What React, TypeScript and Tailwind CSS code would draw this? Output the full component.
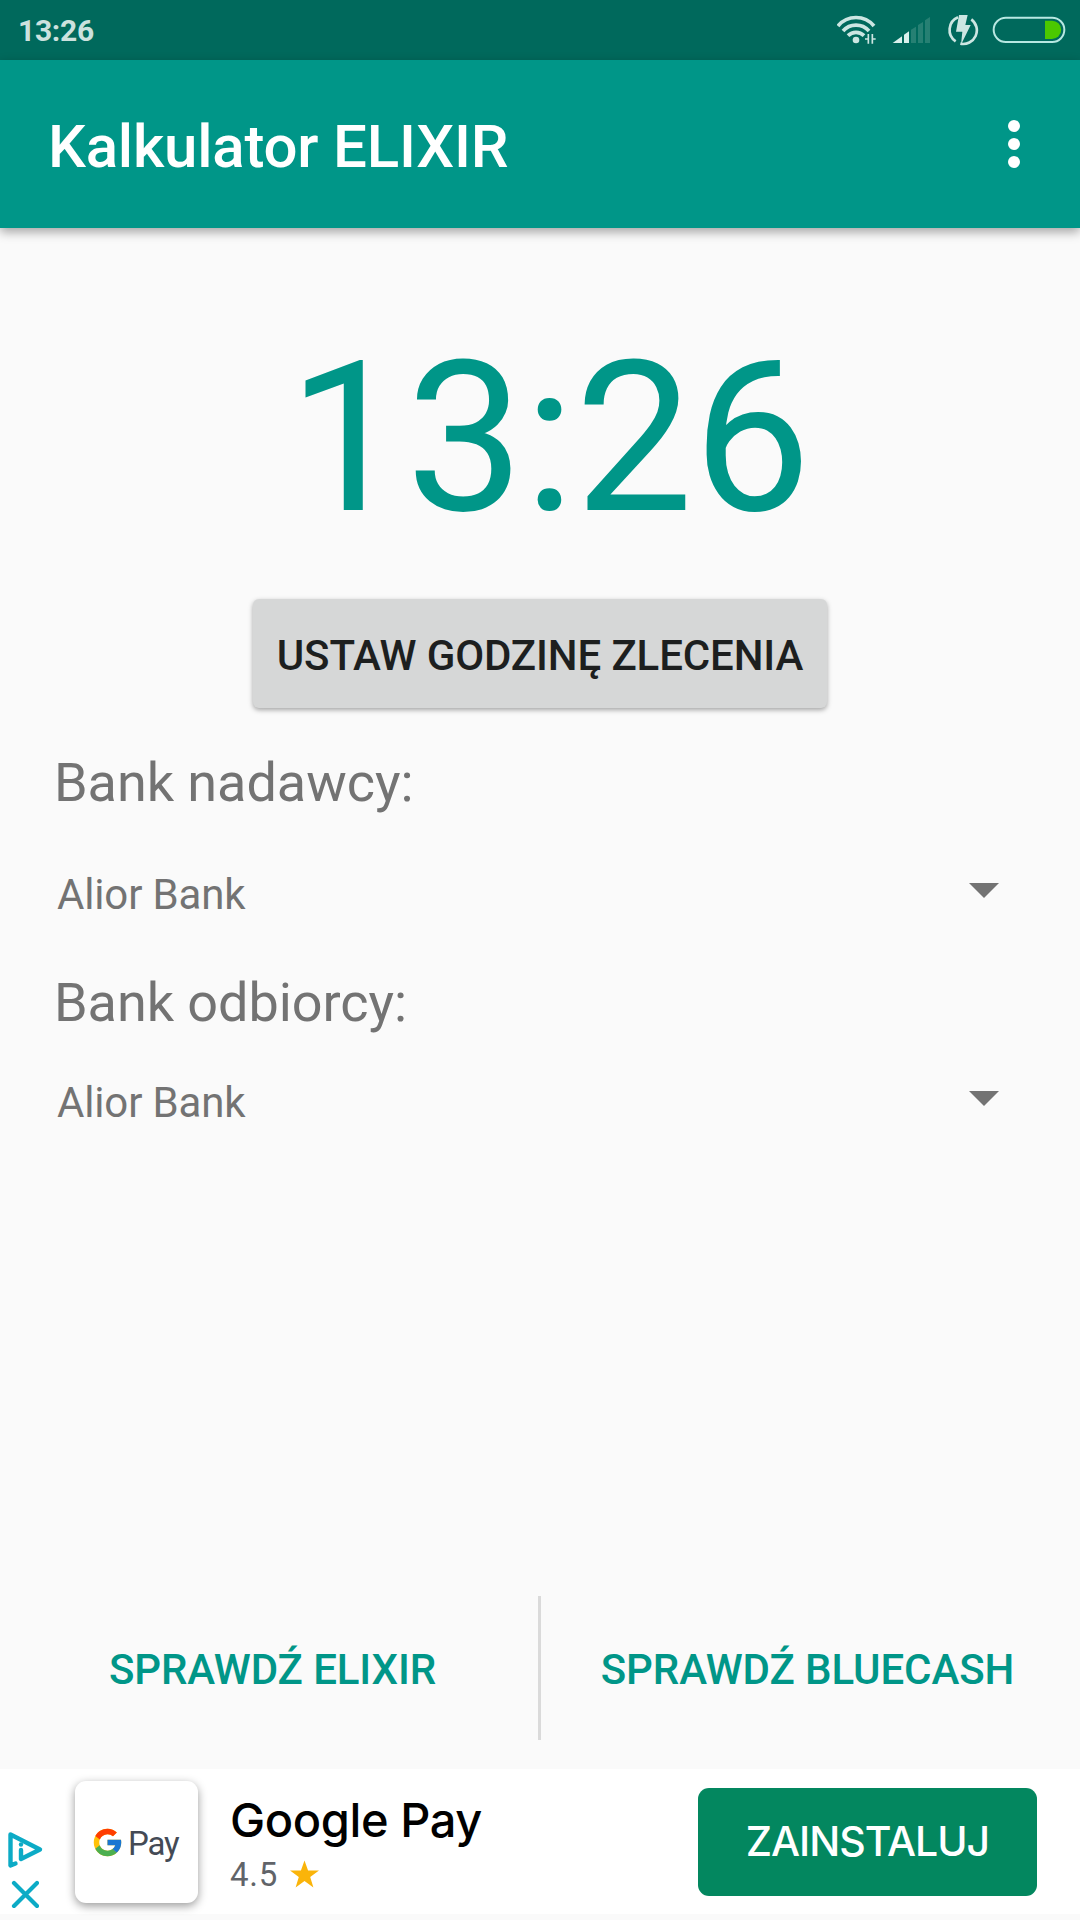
import { FcGoogle } from 'react-icons/fc';

const BANKS = {
  sender: 'Alior Bank',
  receiver: 'Alior Bank',
};

export default function App() {
  return (
    <div className="flex h-[1920px] w-[1080px] flex-col overflow-hidden bg-[#fafafa] font-[Roboto,sans-serif]">
      <StatusBar />
      <AppBar title="Kalkulator ELIXIR" />

      <main className="flex flex-1 flex-col">
        <div className="mt-[87px] pl-[19px] text-center text-[210px] leading-[246px] text-[#009688]">13:26</div>
        <button className="mx-auto mt-[38px] flex h-[109px] w-[574px] items-center justify-center rounded-[6px] bg-[#d6d7d7] pt-[5px] text-[42px] leading-[48px] font-medium tracking-[-0.12px] whitespace-nowrap text-[#1d1f1f] shadow-[0_2px_5px_rgba(0,0,0,0.35)]">
          USTAW GODZINĘ ZLECENIA
        </button>

        <div className="mt-[43px] pl-[54px] text-[54px] leading-[64px] tracking-[-0.05px] text-[#737373]">Bank nadawcy:</div>
        <BankSelect className="mt-[56px]" value={BANKS.sender} />
        <div className="mt-[52px] pl-[54px] text-[54px] leading-[64px] tracking-[-0.05px] text-[#737373]">Bank odbiorcy:</div>
        <BankSelect className="mt-[44px]" value={BANKS.receiver} />
      </main>

      <div className="mb-[29px] flex h-[144px] text-[42px] leading-[48px] font-medium tracking-[-0.1px] text-[#009688]">
        <button className="flex w-[538px] items-center justify-center pt-[3px] pl-[7px] whitespace-nowrap">SPRAWDŹ ELIXIR</button>
        <div className="w-[3px] bg-[#dadada]" />
        <button className="flex flex-1 items-center justify-center pt-[3px] pr-[6px] whitespace-nowrap">SPRAWDŹ BLUECASH</button>
      </div>

      <AdBanner />
    </div>
  );
}

function StatusBar() {
  return (
    <div className="flex h-[60px] items-center bg-[#00695c] pr-[14px] pl-[18px]">
      <span className="flex-1 pt-[2px] text-[30px] leading-[36px] font-bold tracking-[-0.3px] text-[#cce1de]">13:26</span>

      {/* Wi-Fi */}
      <svg className="mr-[15px] h-[30px] w-[40px]" viewBox="51 45 120 90" fill="none" stroke="#cce6e2">
        <path d="M54 78A70 70 0 0 1 162 78" strokeWidth="11" />
        <path d="M69 93A52 52 0 0 1 147 93" strokeWidth="11" />
        <path d="M84 107A34 34 0 0 1 132 107" strokeWidth="11" />
        <circle cx="108" cy="120" r="10" fill="#cce6e2" stroke="none" />
        <path d="M135 117H145M145 102V131M157 102V131M157 117H167" strokeWidth="5" />
      </svg>

      {/* Signal */}
      <svg className="mr-[16px] h-[30px] w-[39px]" viewBox="216 45 117 90">
        <path d="M218 129L246 109V129Z" fill="#d9f0ec" />
        <path d="M252 104L267 94V129H252Z" fill="#d9f0ec" />
        <path d="M273 89L288 80V129H273ZM294 75L309 66V129H294ZM315 61L330 51V129H315Z" fill="#268073" />
      </svg>

      {/* Charging saver */}
      <svg className="mr-[13px] h-[32px] w-[32px]" viewBox="381 42 96 96" fill="none">
        <path d="M414 52A41 41 0 0 0 407 124" stroke="#cce6e2" strokeWidth="8" />
        <path d="M454 58A41 41 0 0 1 421 131" stroke="#cce6e2" strokeWidth="8" />
        <path d="M417 45H443L436 75H452L423 134L427 95H408Z" fill="#cce6e2" />
      </svg>

      {/* Battery */}
      <svg className="h-[28px] w-[74px]" viewBox="516 48 222 84">
        <path d="M675 62H696A27.5 27.5 0 0 1 696 117H675Z" fill="#4bc800" />
        <rect x="521" y="53" width="212" height="73" rx="36.5" fill="none" stroke="#b8e8e2" strokeWidth="6" />
      </svg>
    </div>
  );
}

function AppBar({ title }: { title: string }) {
  return (
    <header className="z-10 flex h-[168px] items-center justify-between bg-[#009688] pr-[60px] pl-[48px] shadow-[0_4px_10px_rgba(0,0,0,0.35)]">
      <h1 className="pt-[5px] text-[60px] leading-[70px] font-medium tracking-[-0.2px] text-white">{title}</h1>
      <button className="flex flex-col gap-[6px]">
        <span className="size-3 rounded-full bg-white" />
        <span className="size-3 rounded-full bg-white" />
        <span className="size-3 rounded-full bg-white" />
      </button>
    </header>
  );
}

function BankSelect({ value, className }: { value: string; className: string }) {
  return (
    <div className={`flex h-[48px] justify-between pr-[81px] pl-[57px] ${className}`}>
      <span className="text-[42px] leading-[48px] tracking-[-0.15px] text-[#737373]">{value}</span>
      <svg className="mt-[12px] h-[15px] w-[30px]" viewBox="0 0 30 15">
        <path d="M0 0H30L15 15Z" fill="#737373" />
      </svg>
    </div>
  );
}

function AdBanner() {
  return (
    <div className="h-[151px] bg-[#fafafa]">
      <div className="flex h-[145px] items-start bg-white">
        {/* Ad choices */}
        <div className="flex w-[75px] flex-col pt-[62px] pl-[7px]">
          <svg className="h-[38px] w-[37px]" viewBox="0 0 37 38" fill="none" stroke="#0cabc6" strokeWidth="4.4" strokeLinecap="round" strokeLinejoin="round">
            <path d="M8.5 32.5L3.5 34.5V3.5L33 18.5L14 28V19" />
            <circle cx="14" cy="13.5" r="2.2" fill="#0cabc6" stroke="none" />
          </svg>
          <svg className="mt-[11px] ml-[4px] h-[28px] w-[28px]" viewBox="0 0 28 28" stroke="#0cabc6" strokeWidth="4.2" strokeLinecap="round">
            <path d="M3 3L26 26M26 3L3 26" />
          </svg>
        </div>

        <div className="mt-[12px] flex h-[122px] w-[123px] items-center rounded-[11px] bg-white pl-[16px] shadow-[0_3px_10px_rgba(0,0,0,0.4)]">
          <FcGoogle className="mt-[1px] size-[33px] shrink-0" />
          <span className="ml-[4px] pt-[3px] text-[33px] leading-[36px] tracking-[-1.2px] text-[#444a55]">Pay</span>
        </div>

        <div className="ml-[32px] flex flex-1 flex-col pt-[23px]">
          <span className="font-[Inter,sans-serif] text-[47px] leading-[56px] font-medium tracking-[-0.4px] whitespace-nowrap text-black">Google Pay</span>
          <div className="flex items-center pt-[6px]">
            <span className="w-[60px] pt-[1px] text-[33px] leading-[39px] tracking-[0.7px] text-[#616469]">4.5</span>
            <svg className="h-[28px] w-[29px]" viewBox="0 0 30 28">
              <path d="M15 0L18.7 10.3H30L20.9 17L24.2 28L15 21.3L5.8 28L9.1 17L0 10.3H11.3Z" fill="#fab40a" />
            </svg>
          </div>
        </div>

        <button className="mt-[19px] mr-[43px] flex h-[108px] w-[339px] items-center justify-center rounded-[11px] bg-[#03875f] pb-[3px] font-[Inter,sans-serif] text-[41px] leading-[48px] font-medium tracking-[-1px] text-white">
          ZAINSTALUJ
        </button>
      </div>
    </div>
  );
}
